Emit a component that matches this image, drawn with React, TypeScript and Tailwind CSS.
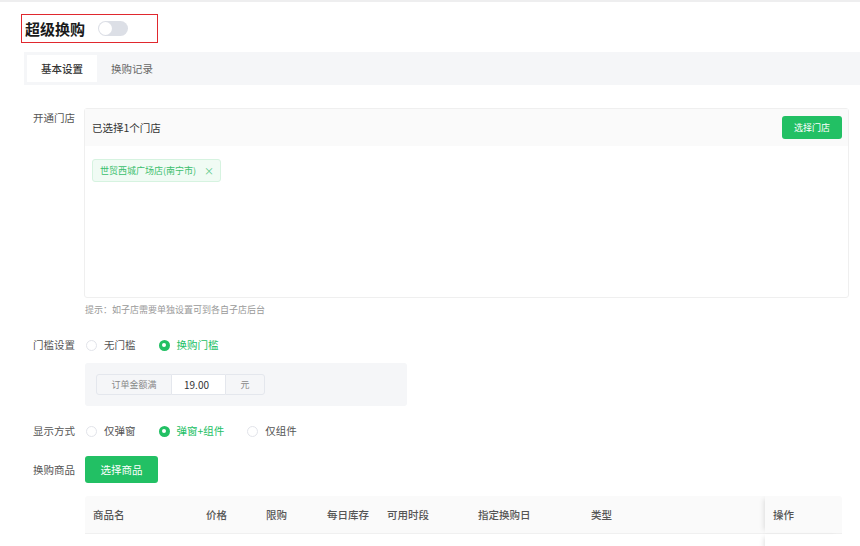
import React from 'react';

const font = "font-['Noto_Sans_CJK_SC','Noto_Sans',sans-serif]";

function Radio({ label, checked }: { label: string; checked?: boolean }) {
  return (
    <div className="flex items-center mr-[23px]">
      {checked ? (
        <span className="w-[11px] h-[11px] rounded-full bg-[#22c064] flex items-center justify-center">
          <span className="w-[4px] h-[4px] rounded-full bg-white" />
        </span>
      ) : (
        <span className="w-[11px] h-[11px] rounded-full border border-[#e2e4ea] bg-white" />
      )}
      <span className={`ml-[7px] text-[10.5px] ${checked ? 'text-[#22c064]' : 'text-[#555]'}`}>{label}</span>
    </div>
  );
}

function Label({ text, className = '' }: { text: string; className?: string }) {
  return <div className={`w-[60px] shrink-0 pr-[9px] text-right text-[10.5px] text-[#555] ${className}`}>{text}</div>;
}

const columns = [
  { title: '商品名', w: 'w-[113px]' },
  { title: '价格', w: 'w-[60px]' },
  { title: '限购', w: 'w-[61px]' },
  { title: '每日库存', w: 'w-[60px]' },
  { title: '可用时段', w: 'w-[91px]' },
  { title: '指定换购日', w: 'w-[113px]' },
  { title: '类型', w: 'w-[182px]' },
];

export default function App() {
  return (
    <div className={`w-[860px] h-[546px] overflow-hidden bg-white text-[#333] ${font}`}>
      <div className="h-[2px] bg-[#eeeeef]" />

      {/* title */}
      <div className="mt-[12px] ml-[21px] w-[137px] h-[29px] border border-[#e0282e] flex items-center pl-[3px]">
        <span className="text-[15px] font-bold text-[#1a1a1a] leading-none">超级换购</span>
        <span className="ml-[13px] w-[30px] h-[15px] rounded-full bg-[#dcdfe6] p-[1px] flex items-center">
          <span className="w-[13px] h-[13px] rounded-full bg-white" />
        </span>
      </div>

      {/* tabs */}
      <div className="mt-[9px] ml-[24px] h-[33px] bg-[#f5f6f8] flex p-[3px]">
        <div className="w-[70px] bg-white flex items-center justify-center text-[10.5px] font-medium text-[#333]">基本设置</div>
        <div className="px-[14px] flex items-center text-[10.5px] text-[#666]">换购记录</div>
      </div>

      <div className="ml-[24px]">
        {/* store */}
        <div className="mt-[23px] flex">
          <Label text="开通门店" className="pt-[2px] leading-[16px]" />
          <div className="w-[765px] h-[190px] border border-[#efefef] rounded-[3px] flex flex-col">
            <div className="h-[37px] bg-[#fafafa] flex items-center justify-between pl-[7px] pr-[6px]">
              <span className="text-[10.5px] text-[#333]">已选择1个门店</span>
              <button className="w-[60px] h-[23px] rounded-[3px] bg-[#22c064] text-white text-[9px]">选择门店</button>
            </div>
            <div className="pt-[13px] pl-[7px] flex">
              <div className="flex items-center h-[23px] pl-[7px] pr-[6px] border border-[#d6f3e0] bg-[#f0fbf4] rounded-[3px] text-[9px] text-[#3bbf6d]">
                <span>世贸西城广场店(南宁市)</span>
                <span className="ml-[8px] text-[10px] text-[#5cc98a]">×</span>
              </div>
            </div>
          </div>
        </div>
        <div className="ml-[61px] mt-[6px] h-[12px] leading-[12px] text-[9px] text-[#999]">提示：如子店需要单独设置可到各自子店后台</div>

        {/* threshold */}
        <div className="mt-[19px] h-[20px] flex items-center">
          <Label text="门槛设置" />
          <div className="flex items-center pl-[2px]">
            <Radio label="无门槛" />
            <Radio label="换购门槛" checked />
          </div>
        </div>
        <div className="ml-[61px] mt-[8px] w-[322px] h-[43px] bg-[#f5f6f8] rounded-[3px] pl-[11px] pt-[11px]">
          <div className="flex h-[21px] text-[9px]">
            <div className="w-[76px] border border-[#e4e7ed] rounded-l-[3px] bg-[#f5f6f8] flex items-center justify-center text-[#888]">订单金额满</div>
            <div className="w-[53px] border-y border-[#e4e7ed] bg-white flex items-center pl-[12px] text-[#333] text-[10px]">19.00</div>
            <div className="w-[40px] border border-[#e4e7ed] rounded-r-[3px] bg-[#f5f6f8] flex items-center justify-center text-[#888]">元</div>
          </div>
        </div>

        {/* display */}
        <div className="mt-[15px] h-[20px] flex items-center">
          <Label text="显示方式" />
          <div className="flex items-center pl-[2px]">
            <Radio label="仅弹窗" />
            <Radio label="弹窗+组件" checked />
            <Radio label="仅组件" />
          </div>
        </div>

        {/* goods */}
        <div className="mt-[15px] flex items-center">
          <Label text="换购商品" />
          <button className="ml-[1px] w-[73px] h-[27px] rounded-[3px] bg-[#22c064] text-white text-[10.5px]">选择商品</button>
        </div>

        <div className="ml-[61px] mt-[13px] w-[757px] rounded-t-[3px] overflow-hidden">
          <div className="flex h-[37px] bg-[#fafafa] text-[10.5px] font-medium text-[#555]">
            {columns.map((c) => (
              <div key={c.title} className={`${c.w} flex items-center pl-[8px]`}>{c.title}</div>
            ))}
            <div className="w-[77px] flex items-center pl-[8px] shadow-[-4px_0_5px_-3px_rgba(0,0,0,0.12)]">操作</div>
          </div>
          <div className="flex h-[20px] border-t border-[#f0f0f0] bg-white">
            <div className="w-[680px]" />
            <div className="w-[77px] shadow-[-4px_0_5px_-3px_rgba(0,0,0,0.12)]" />
          </div>
        </div>
      </div>
    </div>
  );
}
